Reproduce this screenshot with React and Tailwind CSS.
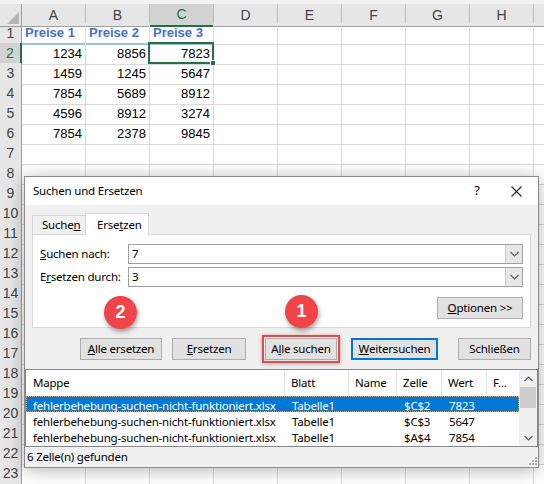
import React from 'react'

const cols = ['A', 'B', 'C', 'D', 'E', 'F', 'G', 'H']
const rows = {
    1: ['Preise 1', 'Preise 2', 'Preise 3'],
    2: [1234, 8856, 7823],
    3: [1459, 1245, 5647],
    4: [7854, 5689, 8912],
    5: [4596, 8912, 3274],
    6: [7854, 2378, 9845],
}

const results = [
    { cell: '$C$2', value: '7823', selected: true },
    { cell: '$C$3', value: '5647' },
    { cell: '$A$4', value: '7854' },
]

const ui = { fontFamily: '"Noto Sans", "Open Sans", sans-serif' }
const sheet = { fontFamily: '"Liberation Sans", Arial, sans-serif' }

const Chevron = ({ up }) => (
    <svg width="9" height="6" viewBox="0 0 9 6">
        <polyline
            points={up ? '0.5,5 4.5,1 8.5,5' : '0.5,1 4.5,5 8.5,1'}
            fill="none"
            stroke="#606060"
            strokeWidth="1.2"
        />
    </svg>
)

const Button = ({ width, children }) => (
    <div
        className="h-[22px] flex items-center justify-center bg-[#e1e1e1] border border-[#adadad] text-black"
        style={{ width }}
    >
        {children}
    </div>
)

const Combo = ({ value }) => (
    <div className="h-[20px] flex-1 flex border border-[#a0a0a0] bg-white">
        <div className="flex-1 pl-[3px] flex items-center">{value}</div>
        <div className="w-[17px] bg-[#e6e6e6] border-l border-[#c8c8c8] flex items-center justify-center">
            <Chevron />
        </div>
    </div>
)

const Badge = ({ n, className }) => (
    <div
        className={`absolute w-[33px] h-[33px] rounded-full bg-[#f04448] text-white font-bold text-[18px] flex items-center justify-center shadow-[1px_3px_5px_rgba(0,0,0,0.35)] ${className}`}
        style={{ fontFamily: '"Liberation Sans", Arial, sans-serif' }}
    >
        {n}
    </div>
)

const Spreadsheet = () => (
    <div style={sheet}>
        <div className="h-[4px] bg-[#f3f3f3]" />
        <div className="grid grid-cols-[22px_repeat(8,64px)_1fr] h-[19px] text-[14px] text-[#444]">
            <div className="bg-[#e6e6e6] border-r border-b border-[#9e9e9e] relative">
                <svg className="absolute right-[2px] bottom-[2px]" width="12" height="12" viewBox="0 0 12 12">
                    <polygon points="12,0 12,12 0,12" fill="#b4b4b4" />
                </svg>
            </div>
            {cols.map(c => (
                <div
                    key={c}
                    className={
                        c === 'C'
                            ? 'bg-[#d2d2d2] border-r border-[#bdbdbd] border-b-2 border-b-[#217346] text-[#217346] flex items-center justify-center'
                            : 'bg-[#e6e6e6] border-r border-[#bdbdbd] border-b border-b-[#9e9e9e] flex items-center justify-center'
                    }
                >
                    {c}
                </div>
            ))}
            <div className="bg-[#e6e6e6] border-b border-[#9e9e9e]" />
        </div>
        {Array.from({ length: 23 }, (_, i) => i + 1).map(r => (
            <div key={r} className="grid grid-cols-[22px_repeat(8,64px)_1fr] h-[20px] text-[13px]">
                <div
                    className={
                        r === 2
                            ? 'bg-[#d2d2d2] border-r-2 border-[#217346] border-b border-b-[#bdbdbd] text-[#217346] text-[14px] flex items-center justify-center'
                            : 'bg-[#e6e6e6] border-r border-[#9e9e9e] border-b border-b-[#bdbdbd] text-[#444] text-[14px] flex items-center justify-center'
                    }
                >
                    {r}
                </div>
                {cols.map((c, ci) => {
                    const v = rows[r] ? rows[r][ci] : undefined
                    if (r === 1 && v) {
                        return (
                            <div key={c} className="border-r border-[#d9d9d9] border-b-2 border-b-[#9bc2e6] flex items-center pl-[3px] font-bold text-[#4472c4]">
                                {v}
                            </div>
                        )
                    }
                    return (
                        <div key={c} className="border-r border-b border-[#d9d9d9] flex items-center justify-end pr-[3px] text-black">
                            {v}
                        </div>
                    )
                })}
                <div className="border-b border-[#d9d9d9]" />
            </div>
        ))}
        {/* Auswahl C2 */}
        <div className="absolute left-[148px] top-[42px] w-[66px] h-[22px] border-2 border-[#217346]" />
        <div className="absolute left-[210px] top-[60px] w-[6px] h-[6px] bg-[#217346] border border-white" />
    </div>
)

const Dialog = () => (
    <div
        className="absolute left-[24px] top-[176px] w-[515px] h-[292px] flex flex-col bg-[#f0f0f0] border border-[#8c8c8c] shadow-[0_2px_16px_rgba(0,0,0,0.3)] text-black text-[11.5px] tracking-[-0.2px]"
        style={ui}
    >
        {/* Titel */}
        <div className="h-[28px] bg-white flex items-center pl-[8px]">
            <span className="flex-1">Suchen und Ersetzen</span>
            <span className="w-[20px] text-[13px] mr-[24px] text-center">?</span>
            <svg className="mr-[16px]" width="11" height="11" viewBox="0 0 11 11">
                <path d="M0.5 0.5 L10.5 10.5 M10.5 0.5 L0.5 10.5" stroke="#222" strokeWidth="1.1" />
            </svg>
        </div>

        <div className="px-[7px]">
            {/* Tabs */}
            <div className="mt-[8px] h-[21px] flex items-end">
                <div className="w-[54px] h-[19px] border border-b-0 border-[#d9d9d9] flex items-center pl-[9px]">
                    Suche<span className="underline">n</span>
                </div>
                <div className="w-[64px] h-[22px] -ml-px -mb-px z-10 bg-white border border-b-0 border-[#d9d9d9] flex items-center pl-[11px]">
                    Erse<span className="underline">t</span>zen
                </div>
            </div>

            {/* Panel */}
            <div className="h-[94px] bg-white border border-[#d9d9d9] pt-[9px] px-[7px]">
                <div className="flex items-center h-[20px]">
                    <div className="w-[88px]"><span className="underline">S</span>uchen nach:</div>
                    <Combo value="7" />
                </div>
                <div className="flex items-center h-[20px] mt-[3px]">
                    <div className="w-[88px]">E<span className="underline">r</span>setzen durch:</div>
                    <Combo value="3" />
                </div>
                <div className="flex justify-end mt-[10px]">
                    <Button width={86}><span className="underline">O</span>ptionen &gt;&gt;</Button>
                </div>
            </div>

            {/* Buttons */}
            <div className="mt-[7px] h-[27px] flex items-center">
                <div className="ml-[48px]">
                    <Button width={82}><span className="underline">A</span>lle ersetzen</Button>
                </div>
                <div className="ml-[10px]">
                    <Button width={74}><span className="underline">E</span>rsetzen</Button>
                </div>
                <div className="ml-[16px] border-2 border-[#e8474b] p-px shadow-[0_1px_4px_rgba(0,0,0,0.3)]">
                    <Button width={72}>A<span className="underline">l</span>le suchen</Button>
                </div>
                <div className="ml-[11px] w-[87px] h-[22px] flex items-center justify-center bg-[#e1e1e1] border-2 border-[#0078d7]">
                    <span className="underline">W</span>eitersuchen
                </div>
                <div className="ml-[20px]">
                    <Button width={73}>Schließen</Button>
                </div>
            </div>
        </div>

        {/* Ergebnisliste */}
        <div className="mt-[7px] h-[78px] bg-white border border-[#828790] flex overflow-hidden">
            <div className="flex-1">
                <div className="h-[26px] grid grid-cols-[259px_64px_48px_45px_45px_1fr] items-center">
                    <div className="pl-[7px] border-r border-[#e5e5e5] h-full flex items-center">Mappe</div>
                    <div className="pl-[6px] border-r border-[#e5e5e5] h-full flex items-center">Blatt</div>
                    <div className="pl-[6px] border-r border-[#e5e5e5] h-full flex items-center">Name</div>
                    <div className="pl-[6px] border-r border-[#e5e5e5] h-full flex items-center">Zelle</div>
                    <div className="pl-[6px] border-r border-[#e5e5e5] h-full flex items-center">Wert</div>
                    <div className="pl-[6px] h-full flex items-center">F...</div>
                </div>
                {results.map(r => (
                    <div
                        key={r.cell}
                        className={
                            r.selected
                                ? 'h-[16px] grid grid-cols-[259px_64px_48px_45px_45px_1fr] items-center bg-[#0078d7] text-white border border-dotted border-[#f0a040]'
                                : 'h-[16px] grid grid-cols-[259px_64px_48px_45px_45px_1fr] items-center border border-transparent'
                        }
                    >
                        <div className="pl-[6px] whitespace-nowrap overflow-hidden">fehlerbehebung-suchen-nicht-funktioniert.xlsx</div>
                        <div className="pl-[6px]">Tabelle1</div>
                        <div />
                        <div className="pl-[6px]">{r.cell}</div>
                        <div className="pl-[6px]">{r.value}</div>
                        <div />
                    </div>
                ))}
            </div>
            {/* Scrollbar */}
            <div className="w-[18px] bg-[#f0f0f0] flex flex-col">
                <div className="h-[17px] flex items-center justify-center"><Chevron up /></div>
                <div className="h-[21px] mx-[1px] bg-[#cdcdcd]" />
                <div className="flex-1" />
                <div className="h-[17px] flex items-center justify-center"><Chevron /></div>
            </div>
        </div>

        {/* Status */}
        <div className="h-[20px] flex items-center pl-[2px] relative">
            6 Zelle(n) gefunden
            <svg className="absolute right-[1px] bottom-[2px]" width="8" height="8" viewBox="0 0 8 8" fill="#b0b0b0">
                <rect x="6" y="0" width="2" height="2" />
                <rect x="3" y="3" width="2" height="2" />
                <rect x="6" y="3" width="2" height="2" />
                <rect x="0" y="6" width="2" height="2" />
                <rect x="3" y="6" width="2" height="2" />
                <rect x="6" y="6" width="2" height="2" />
            </svg>
        </div>
    </div>
)

export default function App() {
    return (
        <div className="relative w-[544px] h-[484px] overflow-hidden bg-white">
            <Spreadsheet />
            <Dialog />
            <Badge n="2" className="left-[104px] top-[296px]" />
            <Badge n="1" className="left-[285px] top-[295px]" />
        </div>
    )
}
